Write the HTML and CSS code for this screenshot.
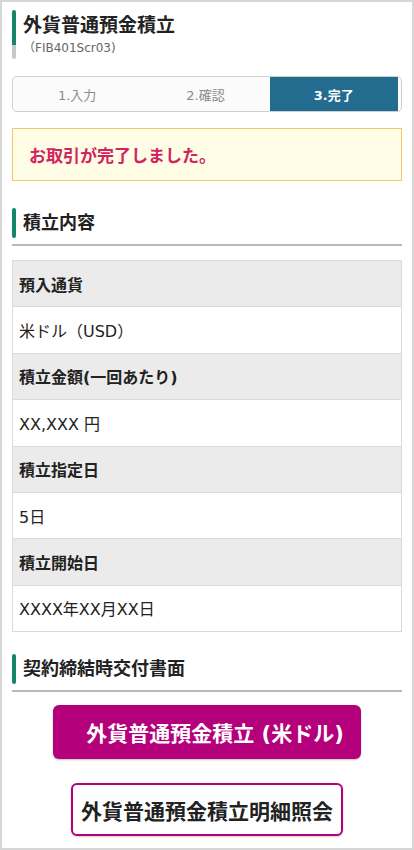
FILE: index.html
```html
<!DOCTYPE html>
<html lang="ja">
<head>
<meta charset="utf-8">
<title>外貨普通預金積立</title>
<link rel="stylesheet" href="styles.css">
</head>
<body>
<div class="page">
  <div class="title-block">
    <div class="title-bar"></div>
    <div class="title-text">
      <h1 class="title">外貨普通預金積立</h1>
      <div class="screen-id">（FIB401Scr03)</div>
    </div>
  </div>

  <div class="steps">
    <div class="step">1.入力</div>
    <div class="step">2.確認</div>
    <div class="step step-active">3.完了</div>
  </div>

  <div class="alert">お取引が完了しました。</div>

  <h2 class="section-head"><span class="section-bar"></span><span class="section-label">積立内容</span></h2>

  <div class="kv">
    <div class="kv-label">預入通貨</div>
    <div class="kv-value">米ドル（USD）</div>
    <div class="kv-label">積立金額(一回あたり)</div>
    <div class="kv-value">XX,XXX 円</div>
    <div class="kv-label">積立指定日</div>
    <div class="kv-value">5日</div>
    <div class="kv-label">積立開始日</div>
    <div class="kv-value">XXXX年XX月XX日</div>
  </div>

  <h2 class="section-head section-head-2"><span class="section-bar"></span><span class="section-label">契約締結時交付書面</span></h2>

  <div class="actions">
    <a class="btn btn-primary" href="#">外貨普通預金積立 (米ドル)</a>
    <a class="btn btn-outline" href="#">外貨普通預金積立明細照会</a>
  </div>
</div>
</body>
</html>
```

FILE: styles.css
```css
html, body {
  margin: 0;
  padding: 0;
  background: #fff;
}

body {
  font-family: "DejaVu Sans", "Noto Sans CJK JP", sans-serif;
  color: #222;
}

.page {
  width: 414px;
  height: 850px;
  box-sizing: border-box;
  border: 2px solid #d6d6d6;
  padding: 8px 10px 0;
  overflow: hidden;
}

/* title */
.title-block {
  display: flex;
  align-items: flex-start;
}

.title-bar {
  width: 4px;
  height: 49px;
  border-radius: 2px;
  background: linear-gradient(to bottom, #14876b 0, #14876b 35px, #c8c8c8 35px, #c8c8c8 100%);
  flex: none;
}

.title-text {
  margin-left: 7px;
}

.title {
  margin: 0;
  padding-top: 3px;
  font-size: 19px;
  line-height: 24px;
  font-weight: bold;
  color: #222;
}

.screen-id {
  margin-top: 2px;
  font-size: 12px;
  line-height: 18px;
  color: #666;
}

/* steps */
.steps {
  margin-top: 17px;
  height: 36px;
  box-sizing: border-box;
  border: 1px solid #cfcfcf;
  border-radius: 5px;
  display: flex;
  background: #fbfbfb;
  overflow: hidden;
  padding-right: 3px;
}

.step {
  flex: 1;
  display: flex;
  align-items: center;
  justify-content: center;
  font-size: 13px;
  color: #8a8a8a;
}

.step-active {
  background: #236b8f;
  color: #fff;
  font-weight: bold;
}

/* alert */
.alert {
  margin-top: 16px;
  height: 53px;
  box-sizing: border-box;
  border: 1px solid #f3c868;
  background: #fffde6;
  display: flex;
  align-items: center;
  padding-left: 16px;
  font-size: 17px;
  font-weight: bold;
  color: #d1245e;
}

/* section heads */
.section-head {
  margin: 27px 0 0;
  padding-bottom: 6px;
  border-bottom: 2px solid #b8b8b8;
  display: flex;
  align-items: center;
  font-size: 18px;
  font-weight: bold;
  color: #222;
}

.section-bar {
  width: 4px;
  height: 30px;
  border-radius: 2px;
  background: #14876b;
  flex: none;
}

.section-label {
  margin-left: 7px;
  line-height: 30px;
}

.section-head-2 {
  margin-top: 22px;
}

/* key value list */
.kv {
  margin-top: 14px;
  border: 1px solid #dadada;
  border-bottom: none;
}

.kv-label,
.kv-value {
  height: 46.4px;
  box-sizing: border-box;
  border-bottom: 1px solid #dadada;
  display: flex;
  align-items: center;
  padding-left: 6px;
  font-size: 16px;
}

.kv-label {
  background: #ebebeb;
  font-weight: bold;
}

.kv-value {
  background: #fff;
}

/* actions */
.actions {
  margin-top: 13px;
  display: flex;
  flex-direction: column;
  align-items: center;
  gap: 24px;
}

.btn {
  display: flex;
  align-items: center;
  box-sizing: border-box;
  text-decoration: none;
  font-size: 21px;
  font-weight: bold;
  border-radius: 6px;
}

.btn-primary {
  height: 54px;
  padding: 0 17px 0 33px;
  background: #b4007b;
  color: #fff;
  box-shadow: 0 1px 2px rgba(0, 0, 0, 0.25);
}

.btn-outline {
  height: 53px;
  padding: 0 8px;
  background: #fff;
  border: 2px solid #b4007b;
  color: #222;
  box-shadow: 0 1px 2px rgba(0, 0, 0, 0.2);
}
```
